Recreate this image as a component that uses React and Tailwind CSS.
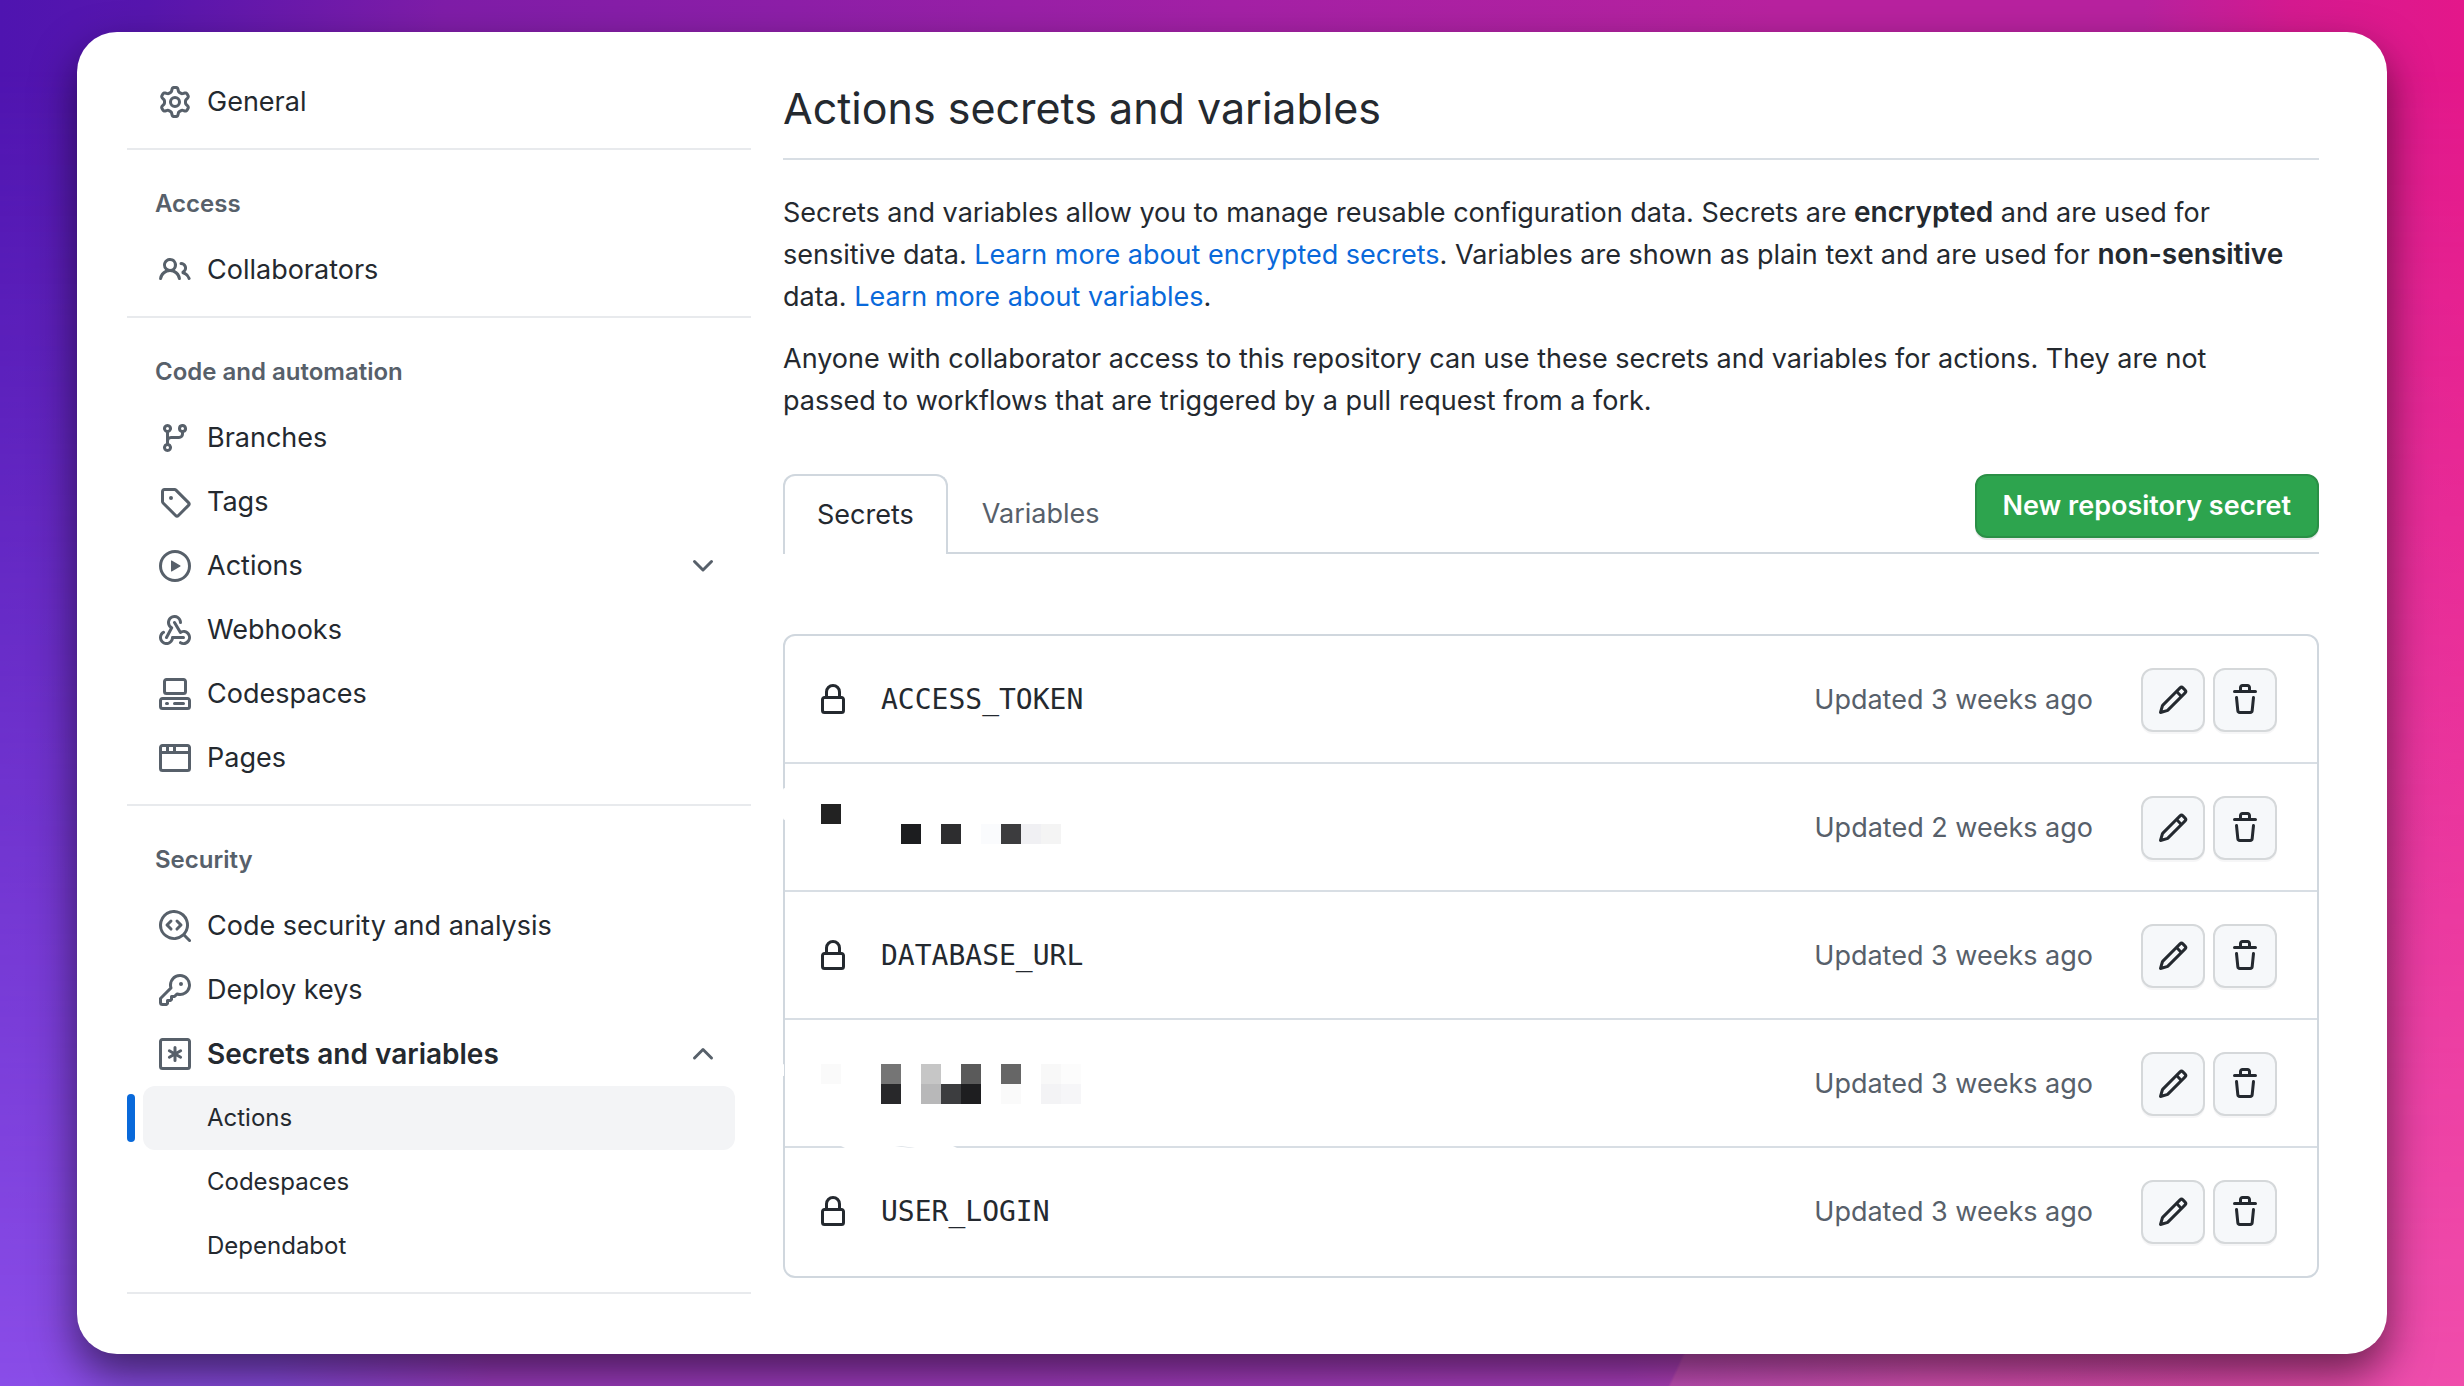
const icons = {
  gear: ["M8 0a8.2 8.2 0 0 1 .701.031C9.444.095 9.99.645 10.16 1.29l.288 1.107c.018.066.079.158.212.224.231.114.454.243.668.386.123.082.233.09.299.071l1.103-.303c.644-.176 1.392.021 1.82.63.27.385.506.792.704 1.218.315.675.111 1.422-.364 1.891l-.814.806c-.049.048-.098.147-.088.294.016.257.016.515 0 .772-.01.147.038.246.088.294l.814.806c.475.469.679 1.216.364 1.891a7.977 7.977 0 0 1-.704 1.217c-.428.61-1.176.807-1.82.63l-1.102-.302c-.067-.019-.177-.011-.3.071a5.909 5.909 0 0 1-.668.386c-.133.066-.194.158-.211.224l-.29 1.106c-.168.646-.715 1.196-1.458 1.26a8.006 8.006 0 0 1-1.402 0c-.743-.064-1.289-.614-1.458-1.26l-.289-1.106c-.018-.066-.079-.158-.212-.224a5.738 5.738 0 0 1-.668-.386c-.123-.082-.233-.09-.299-.071l-1.103.303c-.644.176-1.392-.021-1.82-.63a8.12 8.12 0 0 1-.704-1.218c-.315-.675-.111-1.422.363-1.891l.815-.806c.05-.048.098-.147.088-.294a6.214 6.214 0 0 1 0-.772c.01-.147-.038-.246-.088-.294l-.815-.806C.635 6.045.431 5.298.746 4.623a7.92 7.92 0 0 1 .704-1.217c.428-.61 1.176-.807 1.82-.63l1.102.302c.067.019.177.011.3-.071.214-.143.437-.272.668-.386.133-.066.194-.158.211-.224l.29-1.106C6.009.645 6.556.095 7.299.03 7.53.01 7.764 0 8 0Zm-.571 1.525c-.036.003-.108.036-.137.146l-.289 1.105c-.147.561-.549.967-.998 1.189-.173.086-.34.183-.5.29-.417.278-.97.423-1.529.27l-1.103-.303c-.109-.03-.175.016-.195.045-.22.312-.412.644-.573.99-.014.031-.021.11.059.19l.815.806c.411.406.562.957.53 1.456a4.709 4.709 0 0 0 0 .582c.032.499-.119 1.05-.53 1.456l-.815.806c-.081.08-.073.159-.059.19.162.346.353.677.573.989.02.03.085.076.195.046l1.102-.303c.56-.153 1.113-.008 1.53.27.161.107.328.204.501.29.447.222.85.629.997 1.189l.289 1.105c.029.109.101.143.137.146a6.6 6.6 0 0 0 1.142 0c.036-.003.108-.036.137-.146l.289-1.105c.147-.561.549-.967.998-1.189.173-.086.34-.183.5-.29.417-.278.97-.423 1.529-.27l1.103.303c.109.029.175-.016.195-.045.22-.313.411-.644.573-.99.014-.031.021-.11-.059-.19l-.815-.806c-.411-.406-.562-.957-.53-1.456a4.709 4.709 0 0 0 0-.582c-.032-.499.119-1.05.53-1.456l.815-.806c.081-.08.073-.159.059-.19a6.464 6.464 0 0 0-.573-.989c-.02-.03-.085-.076-.195-.046l-1.102.303c-.56.153-1.113.008-1.53-.27a4.44 4.44 0 0 0-.501-.29c-.447-.222-.85-.629-.997-1.189l-.289-1.105c-.029-.11-.101-.143-.137-.146a6.6 6.6 0 0 0-1.142 0ZM11 8a3 3 0 1 1-6 0 3 3 0 0 1 6 0ZM9.5 8a1.5 1.5 0 1 0-3.001.001A1.5 1.5 0 0 0 9.5 8Z"],
  people: ["M2 5.5a3.5 3.5 0 1 1 5.898 2.549 5.508 5.508 0 0 1 3.034 4.084.75.75 0 1 1-1.482.235 4 4 0 0 0-7.9 0 .75.75 0 0 1-1.482-.236A5.507 5.507 0 0 1 3.102 8.05 3.493 3.493 0 0 1 2 5.5ZM11 4a3.001 3.001 0 0 1 2.22 5.018 5.01 5.01 0 0 1 2.56 3.012.749.749 0 0 1-.885.954.752.752 0 0 1-.549-.514 3.507 3.507 0 0 0-2.522-2.372.75.75 0 0 1-.574-.73v-.352a.75.75 0 0 1 .416-.672A1.5 1.5 0 0 0 11 5.5.75.75 0 0 1 11 4Zm-5.5-.5a2 2 0 1 0-.001 3.999A2 2 0 0 0 5.5 3.5Z"],
  branch: ["M9.5 3.25a2.25 2.25 0 1 1 3 2.122V6A2.5 2.5 0 0 1 10 8.5H6a1 1 0 0 0-1 1v1.128a2.251 2.251 0 1 1-1.5 0V5.372a2.25 2.25 0 1 1 1.5 0v1.836A2.493 2.493 0 0 1 6 7h4a1 1 0 0 0 1-1v-.628A2.25 2.25 0 0 1 9.5 3.25Zm-6 0a.75.75 0 1 0 1.5 0 .75.75 0 0 0-1.5 0Zm8.25-.75a.75.75 0 1 0 0 1.5.75.75 0 0 0 0-1.5ZM4.25 12a.75.75 0 1 0 0 1.5.75.75 0 0 0 0-1.5Z"],
  tag: ["M1 7.775V2.75C1 1.784 1.784 1 2.75 1h5.025c.464 0 .91.184 1.238.513l6.25 6.25a1.75 1.75 0 0 1 0 2.474l-5.026 5.026a1.75 1.75 0 0 1-2.474 0l-6.25-6.25A1.752 1.752 0 0 1 1 7.775Zm1.5 0c0 .066.026.13.073.177l6.25 6.25a.25.25 0 0 0 .354 0l5.025-5.025a.25.25 0 0 0 0-.354l-6.25-6.25a.25.25 0 0 0-.177-.073H2.75a.25.25 0 0 0-.25.25ZM6 5a1 1 0 1 1 0 2 1 1 0 0 1 0-2Z"],
  play: ["M8 0a8 8 0 1 1 0 16A8 8 0 0 1 8 0ZM1.5 8a6.5 6.5 0 1 0 13 0 6.5 6.5 0 0 0-13 0Zm4.879-2.773 4.264 2.559a.25.25 0 0 1 0 .428l-4.264 2.559A.25.25 0 0 1 6 10.559V5.442a.25.25 0 0 1 .379-.215Z"],
  webhook: [
    "M5.5 4.25a2.25 2.25 0 0 1 4.5 0 .75.75 0 0 0 1.5 0 3.75 3.75 0 1 0-6.14 2.889l-2.272 4.258a.75.75 0 0 0 1.324.706L7 7.25a.75.75 0 0 0-.309-1.015A2.25 2.25 0 0 1 5.5 4.25Z",
    "M7.364 3.607a.75.75 0 0 1 1.03.257l2.608 4.349a3.75 3.75 0 1 1-.628 6.785.75.75 0 0 1 .752-1.299 2.25 2.25 0 1 0-.033-3.88.75.75 0 0 1-1.03-.256L7.107 4.636a.75.75 0 0 1 .257-1.03Z",
    "M2.9 8.776A.75.75 0 0 1 2.625 9.8 2.25 2.25 0 1 0 6 11.75a.75.75 0 0 1 .75-.751h5.5a.75.75 0 0 1 0 1.5H7.425a3.751 3.751 0 1 1-5.55-3.998.75.75 0 0 1 1.024.274Z",
  ],
  codespaces: [
    "M0 11.25c0-.966.784-1.75 1.75-1.75h12.5c.966 0 1.75.784 1.75 1.75v3A1.75 1.75 0 0 1 14.25 16H1.75A1.75 1.75 0 0 1 0 14.25Zm2-9.5C2 .784 2.784 0 3.75 0h8.5C13.216 0 14 .784 14 1.75v5a1.75 1.75 0 0 1-1.75 1.75h-8.5A1.75 1.75 0 0 1 2 6.75Zm1.75-.25a.25.25 0 0 0-.25.25v5c0 .138.112.25.25.25h8.5a.25.25 0 0 0 .25-.25v-5a.25.25 0 0 0-.25-.25Zm-2 9.5a.25.25 0 0 0-.25.25v3c0 .138.112.25.25.25h12.5a.25.25 0 0 0 .25-.25v-3a.25.25 0 0 0-.25-.25Z",
    "M7 12.75a.75.75 0 0 1 .75-.75h4.5a.75.75 0 0 1 0 1.5h-4.5a.75.75 0 0 1-.75-.75Zm-4 0a.75.75 0 0 1 .75-.75h.5a.75.75 0 0 1 0 1.5h-.5a.75.75 0 0 1-.75-.75Z",
  ],
  browser: ["M0 2.75C0 1.784.784 1 1.75 1h12.5c.966 0 1.75.784 1.75 1.75v10.5A1.75 1.75 0 0 1 14.25 15H1.75A1.75 1.75 0 0 1 0 13.25ZM14.5 6h-13v7.25c0 .138.112.25.25.25h12.5a.25.25 0 0 0 .25-.25Zm-6-3.5v2h6V2.75a.25.25 0 0 0-.25-.25ZM5 2.5v2h2v-2Zm-3.25 0a.25.25 0 0 0-.25.25V4.5h2v-2Z"],
  codescan: [
    "M8.47 4.97a.75.75 0 0 0 0 1.06L9.94 7.5 8.47 8.97a.75.75 0 1 0 1.06 1.06l2-2a.75.75 0 0 0 0-1.06l-2-2a.75.75 0 0 0-1.06 0ZM6.53 6.03a.75.75 0 0 0-1.06-1.06l-2 2a.75.75 0 0 0 0 1.06l2 2a.75.75 0 1 0 1.06-1.06L5.06 7.5l1.47-1.47Z",
    "M12.246 13.307a7.501 7.501 0 1 1 1.06-1.06l2.474 2.473a.749.749 0 0 1-.326 1.275.749.749 0 0 1-.734-.215ZM1.5 7.5a6.002 6.002 0 0 0 3.608 5.504 6.002 6.002 0 0 0 6.486-1.117.748.748 0 0 1 .292-.293A6 6 0 1 0 1.5 7.5Z",
  ],
  key: ["M10.5 0a5.499 5.499 0 1 1-1.288 10.848l-.932.932a.749.749 0 0 1-.53.22H7v.75a.749.749 0 0 1-.22.53l-.5.5a.749.749 0 0 1-.53.22H5v.75a.749.749 0 0 1-.22.53l-.5.5a.749.749 0 0 1-.53.22h-2A1.75 1.75 0 0 1 0 14.25v-2c0-.199.079-.389.22-.53l4.932-4.932A5.5 5.5 0 0 1 10.5 0Zm-4 5.5c-.001.431.069.86.205 1.269a.75.75 0 0 1-.181.768L1.5 12.56v1.69c0 .138.112.25.25.25h1.69l.06-.06v-1.19a.75.75 0 0 1 .75-.75h1.19l.06-.06v-1.19a.75.75 0 0 1 .75-.75h1.19l1.023-1.025a.75.75 0 0 1 .768-.18A4 4 0 1 0 6.5 5.5ZM11 6a1 1 0 1 1 0-2 1 1 0 0 1 0 2Z"],
  asterisk: [
    "M0 1.75C0 .784.784 0 1.75 0h12.5C15.216 0 16 .784 16 1.75v12.5A1.75 1.75 0 0 1 14.25 16H1.75A1.75 1.75 0 0 1 0 14.25Zm1.75-.25a.25.25 0 0 0-.25.25v12.5c0 .138.112.25.25.25h12.5a.25.25 0 0 0 .25-.25V1.75a.25.25 0 0 0-.25-.25Z",
    "M8 4a.75.75 0 0 1 .75.75V6.7l1.69-.975a.75.75 0 0 1 .75 1.3L9.5 8l1.69.976a.75.75 0 0 1-.75 1.298L8.75 9.3v1.951a.75.75 0 0 1-1.5 0V9.299l-1.69.976a.75.75 0 0 1-.75-1.3L6.5 8l-1.69-.975a.75.75 0 0 1 .75-1.3l1.69.976V4.75A.75.75 0 0 1 8 4Z",
  ],
  lock: ["M4 4a4 4 0 0 1 8 0v2h.25c.966 0 1.75.784 1.75 1.75v5.5A1.75 1.75 0 0 1 12.25 15h-8.5A1.75 1.75 0 0 1 2 13.25v-5.5C2 6.784 2.784 6 3.75 6H4Zm8.25 3.5h-8.5a.25.25 0 0 0-.25.25v5.5c0 .138.112.25.25.25h8.5a.25.25 0 0 0 .25-.25v-5.5a.25.25 0 0 0-.25-.25ZM10.5 6V4a2.5 2.5 0 1 0-5 0v2Z"],
  pencil: ["M11.013 1.427a1.75 1.75 0 0 1 2.474 0l1.086 1.086a1.75 1.75 0 0 1 0 2.474l-8.61 8.61c-.21.21-.47.364-.756.445l-3.251.93a.75.75 0 0 1-.927-.928l.929-3.25c.081-.286.235-.547.445-.758l8.61-8.61Zm.176 4.823L9.75 4.81l-6.286 6.287a.253.253 0 0 0-.064.108l-.558 1.953 1.953-.558a.253.253 0 0 0 .108-.064Zm1.238-3.763a.25.25 0 0 0-.354 0L10.811 3.75l1.439 1.44 1.263-1.263a.25.25 0 0 0 0-.354Z"],
  trash: ["M11 1.75V3h2.25a.75.75 0 0 1 0 1.5H2.75a.75.75 0 0 1 0-1.5H5V1.75C5 .784 5.784 0 6.75 0h2.5C10.216 0 11 .784 11 1.75ZM4.496 6.675l.66 6.6a.25.25 0 0 0 .249.225h5.19a.25.25 0 0 0 .249-.225l.66-6.6a.75.75 0 0 1 1.492.149l-.66 6.6A1.748 1.748 0 0 1 10.595 15h-5.19a1.75 1.75 0 0 1-1.741-1.575l-.66-6.6a.75.75 0 1 1 1.492-.15ZM6.5 1.75V3h3V1.75a.25.25 0 0 0-.25-.25h-2.5a.25.25 0 0 0-.25.25Z"],
  down: ["M12.78 5.22a.749.749 0 0 1 0 1.06l-4.25 4.25a.749.749 0 0 1-1.06 0L3.22 6.28a.749.749 0 1 1 1.06-1.06L8 8.939l3.72-3.719a.749.749 0 0 1 1.06 0Z"],
  up: ["M3.22 10.53a.749.749 0 0 1 0-1.06l4.25-4.25a.749.749 0 0 1 1.06 0l4.25 4.25a.749.749 0 1 1-1.06 1.06L8 6.811 4.28 10.53a.749.749 0 0 1-1.06 0Z"],
};

function Icon({ name }) {
  return (
    <svg viewBox="0 0 16 16" className="size-8 shrink-0 fill-current" aria-hidden="true">
      {icons[name].map((d) => (
        <path key={d} d={d} />
      ))}
    </svg>
  );
}

const groups = [
  { items: [{ icon: "gear", label: "General" }] },
  { title: "Access", items: [{ icon: "people", label: "Collaborators" }] },
  {
    title: "Code and automation",
    items: [
      { icon: "branch", label: "Branches" },
      { icon: "tag", label: "Tags" },
      { icon: "play", label: "Actions", chevron: "down" },
      { icon: "webhook", label: "Webhooks" },
      { icon: "codespaces", label: "Codespaces" },
      { icon: "browser", label: "Pages" },
    ],
  },
  {
    title: "Security",
    items: [
      { icon: "codescan", label: "Code security and analysis" },
      { icon: "key", label: "Deploy keys" },
      {
        icon: "asterisk",
        label: "Secrets and variables",
        chevron: "up",
        children: ["Actions", "Codespaces", "Dependabot"],
      },
    ],
  },
];

// Redaction blocks: [column, row, colour] on a grid of 20px cells.
const redactedA = [
  [0, 0, "#222222"],
  [4, 1, "#1c1d1f"],
  [6, 1, "#2d2d2f"],
  [8, 1, "#fafbfd"],
  [9, 1, "#3c3c3e"],
  [10, 1, "#f0f0f3"],
  [11, 1, "#f4f4f4"],
];
const redactedB = [
  [0, 0, "#fafafa"],
  [3, 0, "#757575"],
  [5, 0, "#c6c6c6"],
  [7, 0, "#5a5a5a"],
  [9, 0, "#666666"],
  [11, 0, "#f8f8f8"],
  [12, 0, "#fcfcfc"],
  [3, 1, "#28282a"],
  [5, 1, "#b8b8b9"],
  [6, 1, "#3c3d3f"],
  [7, 1, "#1e1e20"],
  [9, 1, "#fafafa"],
  [11, 1, "#f3f3f5"],
  [12, 1, "#f6f6f8"],
];

const secrets = [
  { name: "ACCESS_TOKEN", updated: "Updated 3 weeks ago" },
  { cells: redactedA, box: "0 0 260 48", updated: "Updated 2 weeks ago" },
  { name: "DATABASE_URL", updated: "Updated 3 weeks ago" },
  { cells: redactedB, box: "0 0 260 40", updated: "Updated 3 weeks ago" },
  { name: "USER_LOGIN", updated: "Updated 3 weeks ago" },
];

function NavItem({ item }) {
  const body = (
    <>
      <span className="text-[#57606a]">
        <Icon name={item.icon} />
      </span>
      <span className={item.children ? "grow text-[28px] font-semibold" : "grow"}>{item.label}</span>
      {item.chevron && (
        <span className="text-[#57606a]">
          <Icon name={item.chevron} />
        </span>
      )}
    </>
  );
  const row = "flex h-16 w-full items-center gap-4 rounded-xl px-4 text-left";
  return (
    <li>
      {item.chevron ? (
        <button type="button" aria-expanded={item.chevron === "up"} className={row}>
          {body}
        </button>
      ) : (
        <a href="#" className={row}>
          {body}
        </a>
      )}
      {item.children && (
        <ul className="text-[24px]">
          {item.children.map((label, i) => (
            <li key={label} className="relative">
              {i === 0 && <span className="absolute top-2 -left-4 h-12 w-2 rounded-full bg-[#0969da]" />}
              <a
                href="#"
                className={
                  i === 0
                    ? "flex h-16 items-center rounded-xl bg-[#f3f4f6] pl-16"
                    : "flex h-16 items-center rounded-xl pl-16"
                }
              >
                {label}
              </a>
            </li>
          ))}
        </ul>
      )}
    </li>
  );
}

function Sidebar() {
  return (
    <nav aria-label="Repository settings" className="w-[624px] shrink-0">
      {groups.map((group, i) => (
        <section key={i} className="border-b-2 border-[#e8eaed] pb-3.5">
          {group.title && (
            <h2 className="px-7 pt-9 pb-4 text-[24px] leading-9 font-semibold text-[#57606a]">
              {group.title}
            </h2>
          )}
          <ul className="px-4">
            {group.items.map((item) => (
              <NavItem key={item.label} item={item} />
            ))}
          </ul>
        </section>
      ))}
    </nav>
  );
}

function IconButton({ icon, label }) {
  return (
    <button
      type="button"
      aria-label={label}
      className="flex size-16 items-center justify-center rounded-xl border-2 border-[#d5d8da] bg-[#f6f8fa] shadow-[0_2px_0_rgba(31,35,40,0.04)]"
    >
      <Icon name={icon} />
    </button>
  );
}

function SecretRow({ secret, index }) {
  return (
    <li
      className={
        index === 0
          ? "relative flex items-center pt-8 pr-10 pb-[30px] pl-8"
          : "relative flex items-center border-t-2 border-[#d8dee4] pt-8 pr-10 pb-[30px] pl-8 last:pb-8"
      }
    >
      {index === 1 && <span className="absolute top-6 -left-0.5 h-8 w-1 rounded-sm bg-white" />}
      {index === 3 && <span className="absolute top-11 -left-0.5 h-3 w-px rounded-sm bg-white" />}
      {index === 4 && (
        <svg viewBox="0 0 116 2" className="absolute -top-0.5 left-14 h-0.5 w-[116px] fill-white" aria-hidden="true">
          <path d="M0 0H54L70 2H4ZM60 0H112L116 2H74Z" />
        </svg>
      )}
      {secret.name ? (
        <>
          <Icon name="lock" />
          <span className="ml-8 font-['DejaVu_Sans_Mono',monospace] text-[28px]">{secret.name}</span>
        </>
      ) : (
        <svg
          viewBox={secret.box}
          className="ml-1 w-[260px]"
          shapeRendering="crispEdges"
          role="img"
          aria-label="Redacted secret"
        >
          {secret.cells.map(([x, y, fill]) => (
            <rect key={`${x}-${y}`} x={x * 20} y={y * 20} width="20" height="20" fill={fill} />
          ))}
        </svg>
      )}
      <span className="ml-auto text-[#57606a]">{secret.updated}</span>
      <div className="ml-12 flex gap-2">
        <IconButton icon="pencil" label="Edit secret" />
        <IconButton icon="trash" label="Delete secret" />
      </div>
    </li>
  );
}

export default function App() {
  return (
    <div className="relative isolate min-h-screen bg-[linear-gradient(90deg,#4f14b0_0%,#5716ae_6%,#7f1da8_18%,#8d1fa8_32%,#a421a6_50%,#b8229f_72%,#b8229f_87%,#d51a90_93%,#e4178a_100%)] px-[77px] py-8 font-['Inter',sans-serif] text-[27px] leading-[42px] text-[#24292f]">
      <div className="absolute inset-0 -z-10 bg-[linear-gradient(115deg,transparent_74.4%,rgba(255,120,190,0.3)_74.5%,transparent_92%),linear-gradient(90deg,#8a4de8_0%,#8a4be0_11%,#a03cc4_20%,#a43cc4_40%,#b040c4_66%,#d84cb8_78%,#f04dab_100%)] [mask-image:linear-gradient(180deg,transparent_5%,black)]" />
      <div className="flex gap-8 rounded-[40px] bg-white pt-[38px] pr-[68px] pb-[60px] pl-[50px] shadow-[0_20px_44px_rgba(0,0,0,0.55)]">
        <Sidebar />
        <main className="min-w-0 grow">
          <h1 className="border-b-2 border-[#d8dee4] pb-3 text-[43px] leading-[76px]">
            Actions secrets and variables
          </h1>
          <p className="mt-8 pr-4">
            Secrets and variables allow you to manage reusable configuration data. Secrets are{" "}
            <strong className="text-[28px] leading-none font-semibold">encrypted</strong> and are used for sensitive
            data. <a href="#" className="text-[#0969da]">Learn more about encrypted secrets</a>. Variables are shown
            as plain text and are used for{" "}
            <strong className="text-[28px] leading-none font-semibold">non-sensitive</strong> data.{" "}
            <a href="#" className="text-[#0969da]">Learn more about variables</a>.
          </p>
          <p className="mt-5 pr-4">
            Anyone with collaborator access to this repository can use these secrets and variables for actions. They
            are not passed to workflows that are triggered by a pull request from a fork.
          </p>
          <div className="mt-[52px] flex items-start justify-between border-b-2 border-[#d0d7de]">
            <nav aria-label="Secrets and variables" className="-mb-0.5 flex">
              <a
                href="#"
                aria-current="page"
                className="flex h-20 items-center rounded-t-xl border-2 border-b-0 border-[#d0d7de] bg-white px-8"
              >
                Secrets
              </a>
              <a href="#" className="flex h-20 items-center px-[34px] text-[#57606a]">
                Variables
              </a>
            </nav>
            <button
              type="button"
              className="h-16 rounded-xl border-2 border-[#2a8f46] bg-[#2da44e] px-[26px] font-semibold text-white shadow-[0_2px_0_rgba(31,35,40,0.1)]"
            >
              New repository secret
            </button>
          </div>
          <ul className="mt-20 rounded-xl border-2 border-[#d0d7de]">
            {secrets.map((secret, i) => (
              <SecretRow key={i} secret={secret} index={i} />
            ))}
          </ul>
        </main>
      </div>
    </div>
  );
}
